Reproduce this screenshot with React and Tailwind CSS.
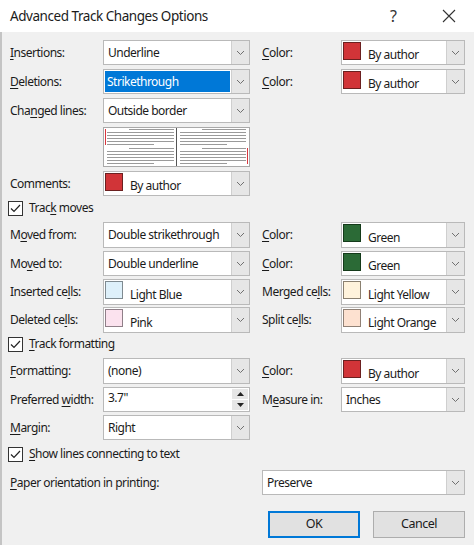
import React from 'react';

const Chevron = () => (
    <svg width="9" height="6" viewBox="0 0 9 6">
        <path d="M1 1l3.5 3.5L8 1" fill="none" stroke="#707070" strokeWidth="1" />
    </svg>
);

function Select({ text, selected, swatch }) {
    return (
        <div className="flex h-full w-full border border-[#b9b9b9] bg-white">
            <div className="flex flex-1 min-w-0 whitespace-nowrap">
                {selected ? (
                    <div className="flex-1 m-px pl-[2px] flex items-center bg-[#0078d7] text-white">{text}</div>
                ) : swatch ? (
                    <>
                        <div className={`self-start mt-px ml-px w-[18px] h-[18px] border shrink-0 ${swatch}`} />
                        <span className="ml-[7px] pt-[5px] self-center">{text}</span>
                    </>
                ) : (
                    <span className="pl-[4px] self-center">{text}</span>
                )}
            </div>
            <div className="w-[18px] shrink-0 bg-[#e6e6e6] border-l border-[#cfcfcf] flex items-center justify-center">
                <Chevron />
            </div>
        </div>
    );
}

const U = ({ children }) => <span className="underline underline-offset-2">{children}</span>;

function Check({ children }) {
    return (
        <div className="flex items-center h-[16px]">
            <div className="w-[15px] h-[15px] border border-[#333333] bg-white flex items-center justify-center ml-[-2px]">
                <svg width="11" height="9" viewBox="0 0 11 9">
                    <path d="M1 4.5l3 3L10 1" fill="none" stroke="#222" strokeWidth="1.2" />
                </svg>
            </div>
            <span className="ml-[6px]">{children}</span>
        </div>
    );
}

function Row({ label, children, right, rightLabel, h, mt }) {
    return (
        <div className={`flex items-center ${h} ${mt}`}>
            <div className="w-[93px] shrink-0 whitespace-nowrap">{label}</div>
            <div className="w-[147px] h-full shrink-0">{children}</div>
            {rightLabel && (
                <>
                    <div className="w-[79px] ml-[12px] shrink-0 whitespace-nowrap">{rightLabel}</div>
                    <div className="w-[124px] h-full shrink-0">{right}</div>
                </>
            )}
        </div>
    );
}

function Preview() {
    const para = (y0, x0, x1, shortEnd) => {
        const ls = [];
        for (let i = 0; i < 6; i++) {
            const y = y0 + i * 3 + 0.5;
            const start = i === 0 ? x0 + 22 : x0;
            const end = i === 5 ? x0 + shortEnd : x1;
            ls.push(<line key={`${y}-${x0}`} x1={start} y1={y} x2={end} y2={y} stroke="#9a9a9a" strokeWidth="1" />);
        }
        return ls;
    };
    return (
        <div className="w-[147px] h-[40px] border border-[#a9a9a9] bg-white">
            <svg width="145" height="38" viewBox="0 0 145 38">
                {para(1, 3, 70, 47)}
                {para(20, 3, 70, 47)}
                {para(1, 76, 142, 47)}
                {para(20, 76, 142, 47)}
                <line x1="72.5" y1="0" x2="72.5" y2="38" stroke="#555" strokeWidth="1" />
                <line x1="1.5" y1="1" x2="1.5" y2="17" stroke="#d9363e" strokeWidth="1" />
                <line x1="143.5" y1="20" x2="143.5" y2="36" stroke="#d9363e" strokeWidth="1" />
            </svg>
        </div>
    );
}

export default function App() {
    return (
        <div className="w-[474px] h-[545px] bg-[#f0f0f0] text-[#1b1b1b] overflow-hidden" style={{ fontFamily: '"Noto Sans", "Open Sans", sans-serif' }}>
            {/* title bar */}
            <div className="h-[32px] bg-white flex items-center pl-[10px] pr-[18px]">
                <span className="text-[13.5px] tracking-[-0.45px] flex-1">Advanced Track Changes Options</span>
                <span className="text-[16px] text-[#333] mr-[45px]">?</span>
                <svg width="14" height="14" viewBox="0 0 14 14">
                    <path d="M1 1l12 12M13 1L1 13" stroke="#333" strokeWidth="1.1" />
                </svg>
            </div>

            <div className="flex flex-col pl-[8px] pr-[9px] text-[12px] tracking-[-0.5px] border-l-[2px] border-[#c4c4c4] h-[513px]">
                <Row mt="mt-[8px]" h="h-[25px]" label={<><U>I</U>nsertions:</>}
                    rightLabel={<><U>C</U>olor:</>} right={<Select text="By author" swatch="bg-[#d13438] border-[#6b2020]" />}>
                    <Select text="Underline" />
                </Row>
                <Row mt="mt-[4px]" h="h-[25px]" label={<><U>D</U>eletions:</>}
                    rightLabel={<><U>C</U>olor:</>} right={<Select text="By author" swatch="bg-[#d13438] border-[#6b2020]" />}>
                    <Select text="Strikethrough" selected />
                </Row>
                <Row mt="mt-[4px]" h="h-[25px]" label={<>Cha<U>n</U>ged lines:</>}>
                    <Select text="Outside border" />
                </Row>
                <div className="mt-[4px] ml-[93px]">
                    <Preview />
                </div>
                <Row mt="mt-[4px]" h="h-[25px]" label={<>Comments:</>}>
                    <Select text="By author" swatch="bg-[#d13438] border-[#6b2020]" />
                </Row>
                <div className="mt-[4px]">
                    <Check>Trac<U>k</U> moves</Check>
                </div>
                <Row mt="mt-[6px]" h="h-[26px]" label={<>M<U>o</U>ved from:</>}
                    rightLabel={<><U>C</U>olor:</>} right={<Select text="Green" swatch="bg-[#2b6a36] border-[#143a1a]" />}>
                    <Select text="Double strikethrough" />
                </Row>
                <Row mt="mt-[3px]" h="h-[25px]" label={<>Mo<U>v</U>ed to:</>}
                    rightLabel={<><U>C</U>olor:</>} right={<Select text="Green" swatch="bg-[#2b6a36] border-[#143a1a]" />}>
                    <Select text="Double underline" />
                </Row>
                <Row mt="mt-[3px]" h="h-[26px]" label={<>Inserted ce<U>l</U>ls:</>}
                    rightLabel={<>Merged ce<U>l</U>ls:</>} right={<Select text="Light Yellow" swatch="bg-[#fff3dc] border-[#8a8070]" />}>
                    <Select text="Light Blue" swatch="bg-[#def0fa] border-[#7f8a90]" />
                </Row>
                <Row mt="mt-[2px]" h="h-[26px]" label={<>Deleted ce<U>l</U>ls:</>}
                    rightLabel={<>Split ce<U>l</U>ls:</>} right={<Select text="Light Orange" swatch="bg-[#fde1d0] border-[#8f8075]" />}>
                    <Select text="Pink" swatch="bg-[#fbe2ee] border-[#8f7f88]" />
                </Row>
                <div className="mt-[3px]">
                    <Check><U>T</U>rack formatting</Check>
                </div>
                <Row mt="mt-[6px]" h="h-[26px]" label={<><U>F</U>ormatting:</>}
                    rightLabel={<><U>C</U>olor:</>} right={<Select text="By author" swatch="bg-[#d13438] border-[#6b2020]" />}>
                    <Select text="(none)" />
                </Row>
                <Row mt="mt-[3px]" h="h-[25px]" label={<>Preferred <U>w</U>idth:</>}
                    rightLabel={<>M<U>e</U>asure in:</>} right={<Select text="Inches" />}>
                    <div className="flex h-full w-full border border-[#b9b9b9] bg-white">
                        <span className="flex-1 pl-[4px] pt-[1px]">3.7"</span>
                        <div className="w-[18px] flex flex-col gap-px p-px">
                            <div className="flex-1 bg-[#e6e6e6] flex items-center justify-center">
                                <svg width="7" height="4" viewBox="0 0 7 4"><path d="M0 4L3.5 0L7 4z" fill="#222" /></svg>
                            </div>
                            <div className="flex-1 bg-[#e6e6e6] flex items-center justify-center">
                                <svg width="7" height="4" viewBox="0 0 7 4"><path d="M0 0L3.5 4L7 0z" fill="#222" /></svg>
                            </div>
                        </div>
                    </div>
                </Row>
                <Row mt="mt-[3px]" h="h-[25px]" label={<><U>M</U>argin:</>}>
                    <Select text="Right" />
                </Row>
                <div className="mt-[6px]">
                    <Check><U>S</U>how lines connecting to text</Check>
                </div>
                <div className="flex items-center h-[25px] mt-[8px]">
                    <div className="w-[252px] shrink-0"><U>P</U>aper orientation in printing:</div>
                    <div className="w-[203px] h-full"><Select text="Preserve" /></div>
                </div>
                <div className="flex justify-end gap-[13px] mt-[16px] text-[12.5px]">
                    <button className="w-[92px] h-[27px] border-2 border-[#0078d7] bg-[#e1e1e1]">OK</button>
                    <button className="w-[92px] h-[27px] border border-[#adadad] bg-[#e1e1e1]">Cancel</button>
                </div>
            </div>
        </div>
    );
}
